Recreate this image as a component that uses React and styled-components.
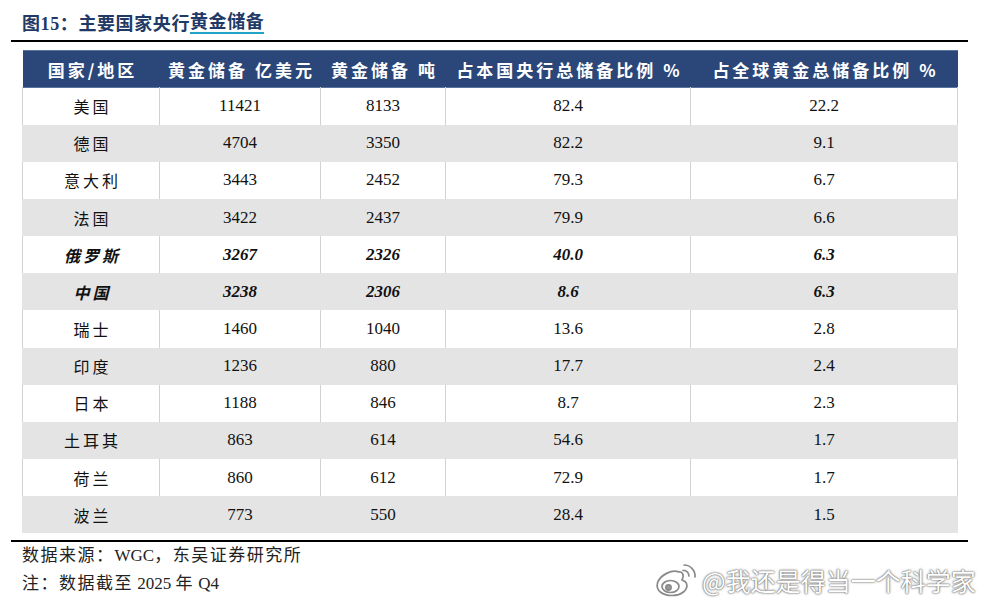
import React from 'react'
import styled, { createGlobalStyle } from "styled-components";

const GlobalStyle = createGlobalStyle`
  body {
    margin: 0;
    background: #ffffff;
    font-family: "Liberation Serif", "Noto Sans CJK SC", serif;
  }
`;

const Page = styled.div`
  position: relative;
  width: 987px;
  height: 603px;
  padding: 12px 0 0 11px;
  box-sizing: border-box;
  overflow: hidden;
`;

const Inner = styled.div`
  padding-left: 11px;
`;

const Title = styled.div`
  display: flex;
  align-items: flex-end;
  font-size: 18px;
  font-weight: 700;
  line-height: 20px;
  letter-spacing: 0.6px;
  color: #1f3a66;
`;

const TitleMark = styled.span`
  display: inline-block;
  border-bottom: 2px solid #1fa3c6;
`;

const Rule = styled.div`
  width: 957px;
  height: 2px;
  background: #000;
  margin-top: ${(p) => p.$top}px;
`;

const Table = styled.table`
  width: 935px;
  margin-top: 8px;
  border-collapse: collapse;
  table-layout: fixed;
`;

const HeadRow = styled.tr`
  height: 37px;
  background: #2b4779;
  border-top: 1px solid #5a74a0;
  border-bottom: 1px solid #5a74a0;
`;

const HeadCell = styled.th`
  padding: 0 0 0 3px;
  color: #ffffff;
  font-family: "Noto Sans CJK SC", sans-serif;
  font-size: 17px;
  font-weight: 700;
  letter-spacing: 3px;
  text-align: center;
  white-space: nowrap;
`;

const Row = styled.tr`
  height: 37.17px;
  background: ${(p) => (p.$stripe ? "#e4e4e4" : "#ffffff")};
`;

const Cell = styled.td`
  padding: 0;
  text-align: center;
  color: #111;
  font-size: 17px;
  font-weight: ${(p) => (p.$strong ? 700 : 400)};
  font-style: ${(p) => (p.$strong ? "italic" : "normal")};
  border-left: 1px solid ${(p) => (p.$stripe ? "#e4e4e4" : "#d2d2d2")};
  border-right: 1px solid ${(p) => (p.$stripe ? "#e4e4e4" : "#d2d2d2")};
`;

const Country = styled(Cell)`
  font-family: "Noto Sans CJK SC", sans-serif;
  font-size: 16px;
  letter-spacing: 3px;
  padding-left: 3px;
`;

const Notes = styled.div`
  padding-left: 11px;
  color: #222;
  font-size: 17px;
  letter-spacing: 1.5px;
  line-height: 28px;
`;

const Latin = styled.span`
  letter-spacing: 0;
`;

const Watermark = styled.div`
  position: absolute;
  left: 655px;
  top: 562px;
  display: flex;
  align-items: center;
  gap: 3px;
  font-family: "Noto Sans CJK SC", sans-serif;
  font-size: 25px;
  color: #ffffff;
  text-shadow: 0 0 1px #555, 0 0 2px #888, 0 0 3px #aaa;
`;

const columns = [
  { label: "国家/地区", width: 137 },
  { label: "黄金储备 亿美元", width: 161 },
  { label: "黄金储备 吨", width: 125 },
  { label: "占本国央行总储备比例 %", width: 245 },
  { label: "占全球黄金总储备比例 %", width: 267 },
];

const rows = [
  ["美国", "11421", "8133", "82.4", "22.2"],
  ["德国", "4704", "3350", "82.2", "9.1"],
  ["意大利", "3443", "2452", "79.3", "6.7"],
  ["法国", "3422", "2437", "79.9", "6.6"],
  ["俄罗斯", "3267", "2326", "40.0", "6.3", true],
  ["中国", "3238", "2306", "8.6", "6.3", true],
  ["瑞士", "1460", "1040", "13.6", "2.8"],
  ["印度", "1236", "880", "17.7", "2.4"],
  ["日本", "1188", "846", "8.7", "2.3"],
  ["土耳其", "863", "614", "54.6", "1.7"],
  ["荷兰", "860", "612", "72.9", "1.7"],
  ["波兰", "773", "550", "28.4", "1.5"],
];

const WeiboLogo = () => (
  <svg width="44" height="36" viewBox="0 0 44 36">
    <g fill="#ffffff" stroke="#8a8a8a" strokeWidth="1.7" strokeLinecap="round">
      <path d="M24 10 C17 7 5 13 2.5 21 C0.5 29 8 33.5 17 33.5 C27 33.5 33.5 27.5 31.5 21.5 C30.5 18.5 27.5 18.5 27 18 C29.5 13 27.5 9.5 24 10 Z" />
      <ellipse cx="15.5" cy="24.5" rx="8.5" ry="6" />
      <circle cx="13.5" cy="25.5" r="2.6" fill="#999" />
      <path d="M29 3 A11 11 0 0 1 40 15" fill="none" />
      <path d="M28 8.5 A5.5 5.5 0 0 1 34 14" fill="none" />
    </g>
  </svg>
);

export default function App() {
  return (
    <Page>
      <GlobalStyle />
      <Inner>
        <Title>
          图15：主要国家央行<TitleMark>黄金储备</TitleMark>
        </Title>
      </Inner>
      <Rule $top={6} />
      <Inner>
        <Table>
          <colgroup>
            {columns.map((c) => (
              <col key={c.label} style={{ width: c.width }} />
            ))}
          </colgroup>
          <thead>
            <HeadRow>
              {columns.map((c) => (
                <HeadCell key={c.label}>{c.label}</HeadCell>
              ))}
            </HeadRow>
          </thead>
          <tbody>
            {rows.map((r, i) => {
              const stripe = i % 2 === 1;
              const strong = !!r[5];
              return (
                <Row key={r[0]} $stripe={stripe}>
                  <Country $stripe={stripe} $strong={strong}>{r[0]}</Country>
                  {r.slice(1, 5).map((v, j) => (
                    <Cell key={j} $stripe={stripe} $strong={strong}>{v}</Cell>
                  ))}
                </Row>
              );
            })}
          </tbody>
        </Table>
      </Inner>
      <Rule $top={7} />
      <Notes>
        <div>数据来源：<Latin>WGC</Latin>，东吴证券研究所</div>
        <div>注：数据截至<Latin> 2025 </Latin>年<Latin> Q4</Latin></div>
      </Notes>
      <Watermark>
        <WeiboLogo />
        <span>@我还是得当一个科学家</span>
      </Watermark>
    </Page>
  );
}
